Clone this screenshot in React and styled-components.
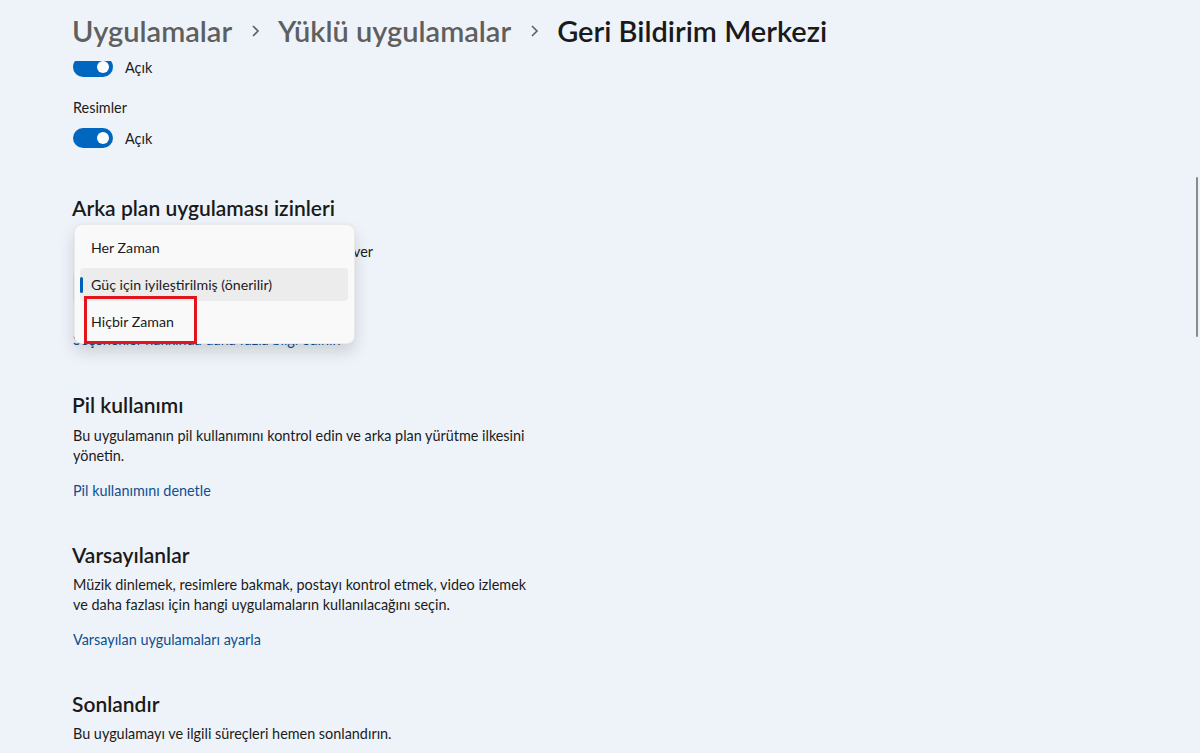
import React from "react";
import styled, { createGlobalStyle } from "styled-components";

const GlobalStyle = createGlobalStyle`
  html, body {
    margin: 0;
    padding: 0;
    background: #eef3f9;
  }
  body {
    font-family: Lato, "Noto Sans", sans-serif;
    color: #1b1b1b;
    overflow: hidden;
  }
`;

const Page = styled.div`
  position: relative;
  width: 1200px;
  height: 753px;
  background: #eef3f9;
  display: flex;
  flex-direction: column;
  overflow: hidden;
`;

const Header = styled.header`
  height: 61px;
  flex-shrink: 0;
  display: flex;
  align-items: center;
  padding-left: 72px;
  box-sizing: border-box;
  gap: 14px;
  font-size: 29px;
  font-weight: 600;
  line-height: 36px;
  background: #eef3f9;
  position: relative;
  z-index: 2;
`;

const Crumb = styled.span`
  color: ${(p) => (p.$current ? "#1a1a1a" : "#5f5f5f")};
`;

const Chevron = styled.span`
  display: flex;
  width: 18px;
  justify-content: center;
`;

const Viewport = styled.main`
  flex: 1;
  overflow: hidden;
`;

const Content = styled.div`
  margin-top: -4px;
  padding-left: 73px;
  width: 490px;
  display: flex;
  flex-direction: column;
`;

const ToggleRow = styled.div`
  display: flex;
  align-items: center;
  gap: 12px;
  height: 20px;
  font-size: 14.4px;
  margin-top: ${(p) => p.$mt || 0}px;
`;

const Toggle = styled.span`
  width: 40px;
  height: 20px;
  border-radius: 10px;
  background: #0067c0;
  display: flex;
  align-items: center;
  justify-content: flex-end;
  padding-right: 4px;
  box-sizing: border-box;

  &::after {
    content: "";
    width: 12px;
    height: 12px;
    border-radius: 50%;
    background: #ffffff;
  }
`;

const Label = styled.div`
  font-size: 14.4px;
  line-height: 20px;
  margin-top: ${(p) => p.$mt || 0}px;
`;

const Section = styled.section`
  position: relative;
  margin-top: ${(p) => p.$mt || 40}px;
  display: flex;
  flex-direction: column;
`;

const Heading = styled.h2`
  margin: 0 0 0 -1px;
  font-size: 21px;
  line-height: 28px;
  font-weight: 600;
  color: #1a1a1a;
`;

const Desc = styled.p`
  margin: ${(p) => p.$mt || 6}px 0 0;
  font-size: 14.4px;
  line-height: 20px;
  color: #1b1b1b;
`;

const Link = styled.a`
  margin-top: ${(p) => p.$mt || 15}px;
  font-size: 14.4px;
  line-height: 20px;
  color: #0f4f92;
  text-decoration: none;
  cursor: pointer;
  align-self: flex-start;
`;

const Combo = styled.div`
  margin-top: 10px;
  width: 260px;
  height: 32px;
  border-radius: 4px;
  background: #fbfbfb;
  border: 1px solid #e5e5e5;
  box-sizing: border-box;
`;

const Menu = styled.ul`
  position: absolute;
  left: 1px;
  top: 30px;
  width: 281px;
  height: 120px;
  margin: 0;
  padding: 4px 6px 5px 5px;
  box-sizing: border-box;
  list-style: none;
  background: #f9f9f9;
  border: 1px solid rgba(0, 0, 0, 0.06);
  border-radius: 8px;
  box-shadow: 0 8px 16px rgba(0, 0, 0, 0.14), 0 0 2px rgba(0, 0, 0, 0.06);
  z-index: 3;
`;

const MenuItem = styled.li`
  position: relative;
  height: 37px;
  display: flex;
  align-items: center;
  font-size: 14.2px;
  color: #1b1b1b;

  &::before {
    content: "";
    position: absolute;
    inset: 2px 0;
    border-radius: 4px;
    background: ${(p) => (p.$selected ? "#ececec" : "transparent")};
  }

  & > span {
    position: relative;
    padding-left: 11px;
  }

  & > i {
    position: absolute;
    left: 0;
    top: 11px;
    width: 3px;
    height: 16px;
    border-radius: 2px;
    background: #005fb8;
  }
`;

const Highlight = styled.div`
  position: absolute;
  left: 9px;
  top: 71px;
  width: 113px;
  height: 48px;
  border: 3px solid #e3141c;
  box-sizing: border-box;
  pointer-events: none;
`;

const ScrollThumb = styled.div`
  position: absolute;
  right: 2px;
  top: 177px;
  width: 2px;
  height: 160px;
  border-radius: 1px;
  background: #8a8a8a;
`;

const ChevronIcon = () => (
  <svg width="10" height="14" viewBox="0 0 10 14">
    <path d="M3 2l5 5-5 5" fill="none" stroke="#5f5f5f" strokeWidth="1.6" />
  </svg>
);

export default function App() {
  return (
    <Page>
      <GlobalStyle />
      <Header>
        <Crumb>Uygulamalar</Crumb>
        <Chevron>
          <ChevronIcon />
        </Chevron>
        <Crumb>Yüklü uygulamalar</Crumb>
        <Chevron>
          <ChevronIcon />
        </Chevron>
        <Crumb $current>Geri Bildirim Merkezi</Crumb>
      </Header>
      <Viewport>
        <Content>
          <ToggleRow>
            <Toggle />
            <span>Açık</span>
          </ToggleRow>
          <Label $mt={21}>Resimler</Label>
          <ToggleRow $mt={10}>
            <Toggle />
            <span>Açık</span>
          </ToggleRow>

          <Section $mt={46}>
            <Heading>Arka plan uygulaması izinleri</Heading>
            <Label $mt={20}>Bu uygulamanın arka planda çalışmasına izin ver</Label>
            <Combo />
            <Link $mt={26}>Seçenekler hakkında daha fazla bilgi edinin</Link>
            <Menu>
              <MenuItem>
                <span>Her Zaman</span>
              </MenuItem>
              <MenuItem $selected>
                <i />
                <span>Güç için iyileştirilmiş (önerilir)</span>
              </MenuItem>
              <MenuItem>
                <span>Hiçbir Zaman</span>
              </MenuItem>
              <Highlight />
            </Menu>
          </Section>

          <Section $mt={41}>
            <Heading>Pil kullanımı</Heading>
            <Desc $mt={7}>
              Bu uygulamanın pil kullanımını kontrol edin ve arka plan yürütme ilkesini
              <br />
              yönetin.
            </Desc>
            <Link>Pil kullanımını denetle</Link>
          </Section>

          <Section>
            <Heading>Varsayılanlar</Heading>
            <Desc>
              Müzik dinlemek, resimlere bakmak, postayı kontrol etmek, video izlemek
              <br />
              ve daha fazlası için hangi uygulamaların kullanılacağını seçin.
            </Desc>
            <Link>Varsayılan uygulamaları ayarla</Link>
          </Section>

          <Section>
            <Heading>Sonlandır</Heading>
            <Desc>Bu uygulamayı ve ilgili süreçleri hemen sonlandırın.</Desc>
          </Section>
        </Content>
      </Viewport>
      <ScrollThumb />
    </Page>
  );
}
